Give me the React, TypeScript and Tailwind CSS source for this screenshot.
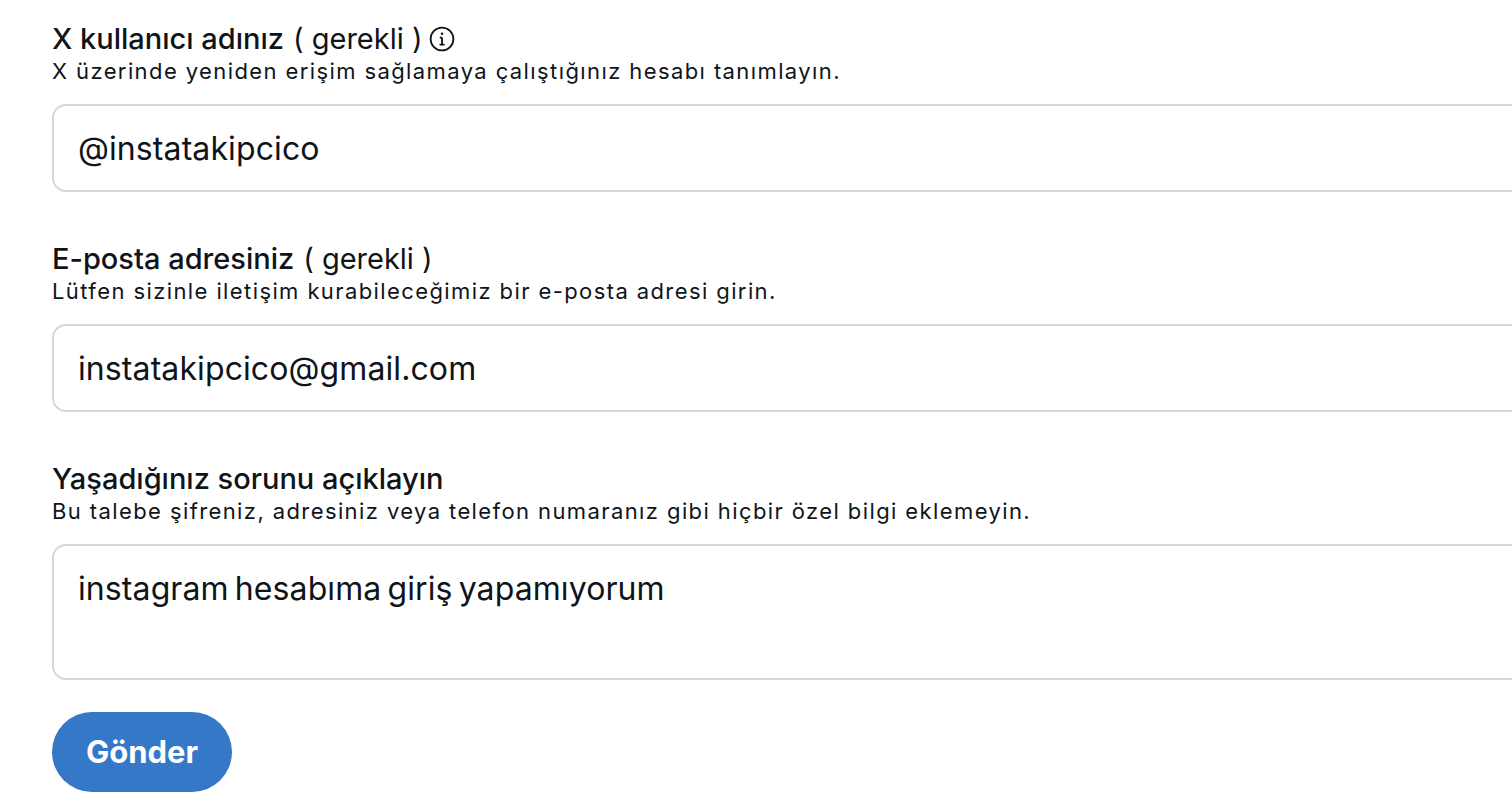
const font = 'font-["Inter",sans-serif]'

function Field({ label, required, info, help, value, tall }: { label: string; required?: boolean; info?: boolean; help: string; value: string; tall?: boolean }) {
  return (
    <div className="flex flex-col">
      <div className="h-[32px] flex items-center text-[#0f1419] text-[29px] leading-[32px] font-medium">
        <span>{label}</span>
        {required && <span className="ml-[9px] font-normal">( gerekli )</span>}
        {info && (
          <svg className="ml-[7px]" width="26" height="26" viewBox="0 0 26 26" fill="none" stroke="#0f1419" strokeWidth="1.8">
            <circle cx="13" cy="13" r="11.4" />
            <path d="M13 11.5v7M10.6 18.6h5M10.8 11.6H13" />
            <circle cx="13" cy="7.8" r="1.2" fill="#0f1419" stroke="none" />
          </svg>
        )}
      </div>
      <div className="mt-[2px] h-[28px] text-[#0f1419] text-[22px] leading-[28px] tracking-[1.4px]">{help}</div>
      <div className={`mt-[19px] mr-[-20px] border-2 border-[#d2d8dc] rounded-[14px] bg-white px-[24px] text-[#0f1419] text-[32px] tracking-[0.1px] ${tall ? 'h-[136px] pt-[21px] leading-[44px] [word-spacing:-3px]' : 'h-[88px] pt-[2px] flex items-center'}`}>
        {value}
      </div>
    </div>
  )
}

export default function App() {
  return (
    <div className={`${font} w-[1512px] h-[804px] overflow-hidden bg-white pl-[52px] pt-[23px]`}>
      <div className="flex flex-col gap-[51px]">
        <Field label="X kullanıcı adınız" required info help="X üzerinde yeniden erişim sağlamaya çalıştığınız hesabı tanımlayın." value="@instatakipcico" />
        <Field label="E-posta adresiniz" required help="Lütfen sizinle iletişim kurabileceğimiz bir e-posta adresi girin." value="instatakipcico@gmail.com" />
        <Field label="Yaşadığınız sorunu açıklayın" help="Bu talebe şifreniz, adresiniz veya telefon numaranız gibi hiçbir özel bilgi eklemeyin." value="instagram hesabıma giriş yapamıyorum" tall />
      </div>
      <button className="mt-[32px] w-[180px] h-[80px] rounded-full bg-[#3578c8] text-white text-[31px] font-bold">Gönder</button>
    </div>
  )
}
